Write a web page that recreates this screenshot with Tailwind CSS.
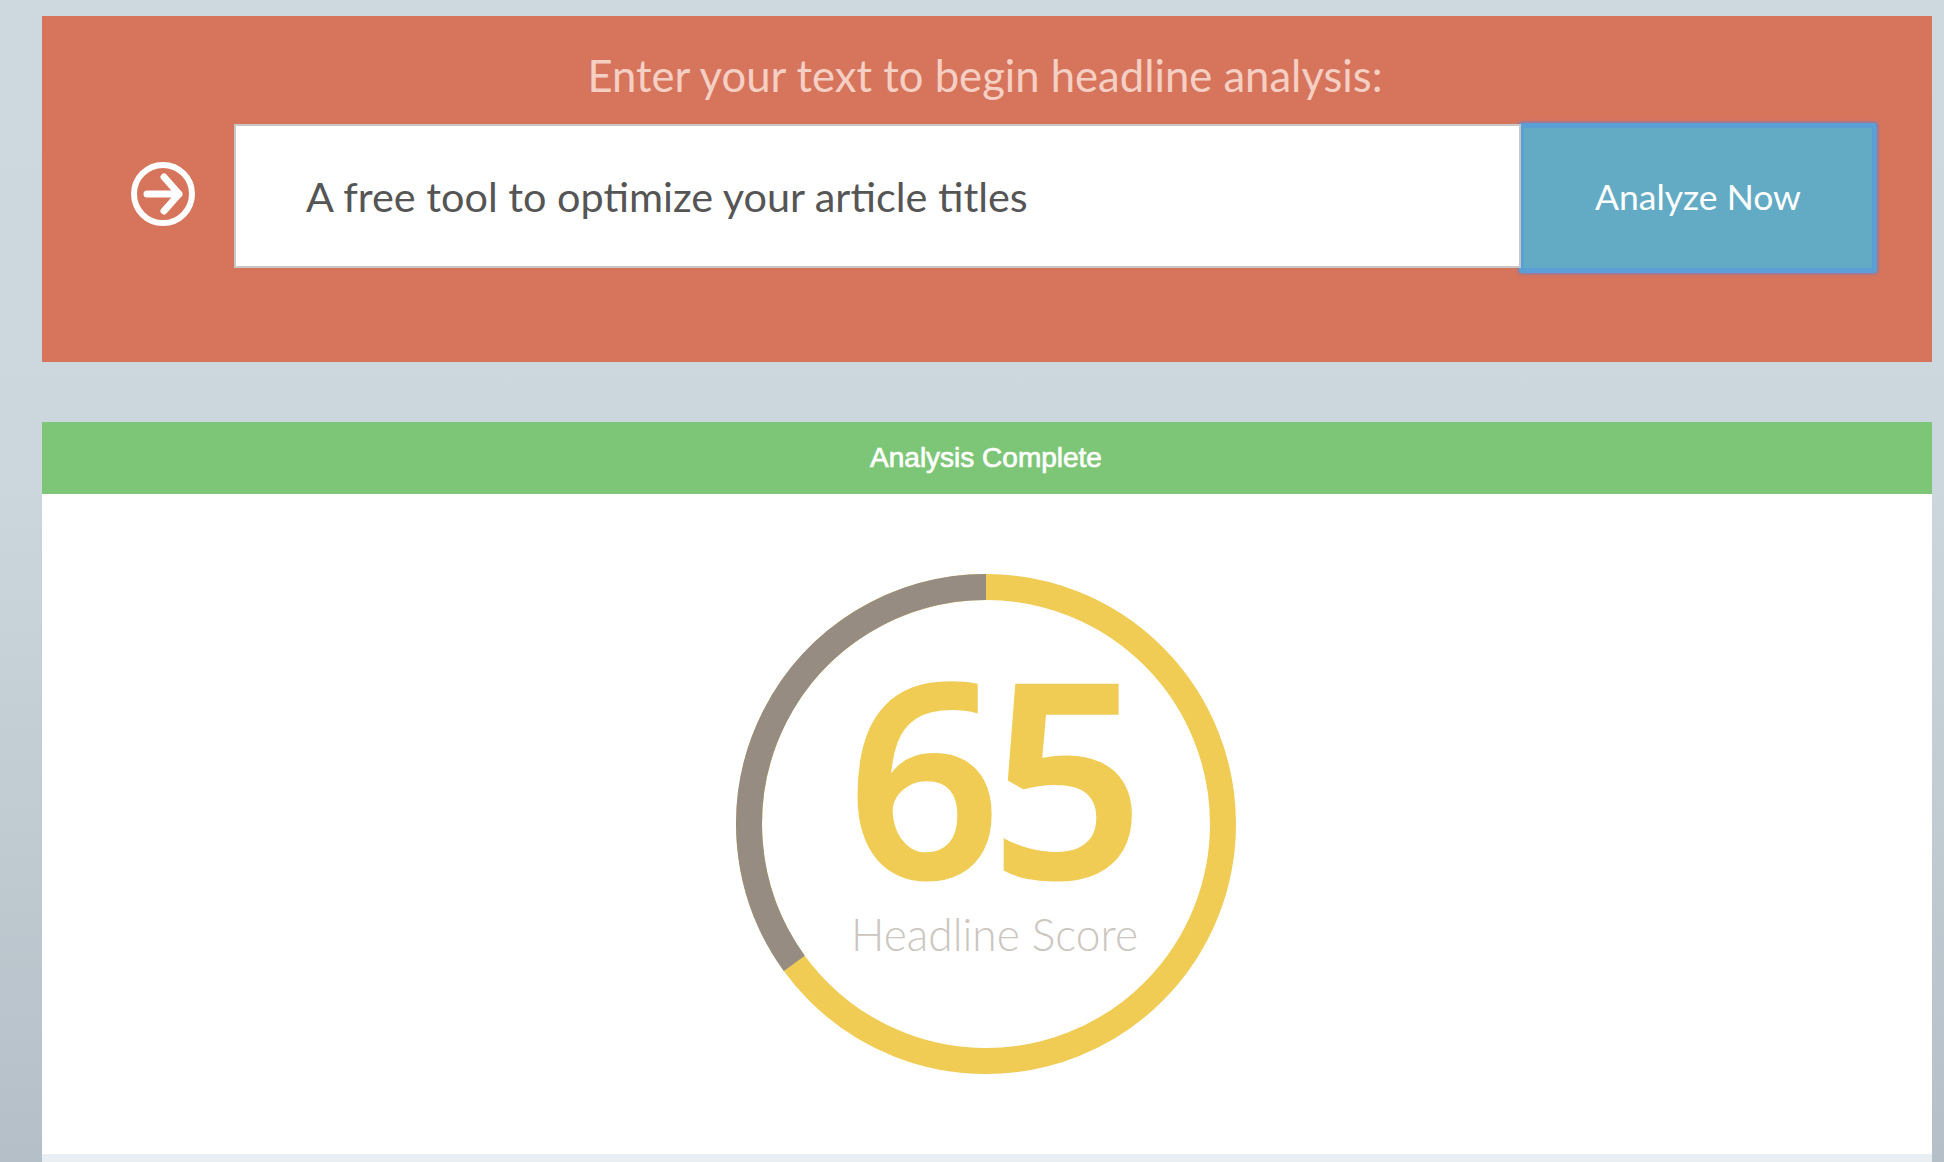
<!doctype html>
<html><head><meta charset="utf-8"><script src="https://cdn.jsdelivr.net/npm/@tailwindcss/browser@4"></script></head>
<body class="m-0 overflow-hidden">
<div class="w-[1944px] h-[1162px] overflow-hidden flex flex-col pt-4 pl-[42px] pr-3 bg-[linear-gradient(180deg,#cdd8df_0%,#cbd6dd_42%,#b4bfc7_100%)] font-['Lato',sans-serif]">
  <section class="h-[346px] shrink-0 bg-[#d6755c] flex flex-col">
    <h1 class="h-[108px] pt-[34px] text-center text-[43.6px] leading-[50px] font-normal text-[#f6cfc4] pr-1">Enter your text to begin headline analysis:</h1>
    <div class="flex items-start">
      <div class="w-[192px] h-[144px] flex items-center justify-center pl-[49px] pb-[4px] shrink-0">
        <svg class="w-16 h-16" viewBox="0 0 64 64" fill="none" stroke="#fff" stroke-linecap="round" stroke-linejoin="round">
          <circle cx="32" cy="32" r="29" stroke-width="6"/>
          <path d="M16 32H48M33 15L48 32L33 49" stroke-width="7"/>
        </svg>
      </div>
      <div class="w-[1287px] h-[144px] shrink-0 bg-white border-2 border-[#c8c8c8] flex items-center pl-[70px] text-[#555555] text-[41.4px] relative z-20">A free tool to optimize your article titles</div>
      <button class="w-[358px] h-[150px] -mt-px -ml-[2px] shrink-0 bg-[#63abc4] border-[5px] border-[#5a9fd6] rounded-[3px] shadow-[0_0_3px_1px_rgba(90,130,215,0.75)] text-white text-[35.5px] flex items-center justify-center pb-[2px] relative z-10">Analyze Now</button>
    </div>
  </section>
  <section class="mt-[60px] flex-1 flex flex-col">
    <div class="h-[72px] shrink-0 bg-[#7dc677] flex items-center justify-center pr-[2px] text-white text-[28px] font-normal [-webkit-text-stroke:0.7px_white] font-['Liberation_Sans',sans-serif]">Analysis Complete</div>
    <div class="h-[660px] shrink-0 bg-white relative">
      <svg class="absolute left-[694px] top-[80px] w-[500px] h-[500px]" viewBox="0 0 500 500" fill="none" stroke-width="26">
        <circle cx="250" cy="250" r="237" stroke="#f0cc54"/>
        <path d="M250 13A237 237 0 0 0 58.3 389.3" stroke="#968c81"/>
      </svg>
      <div class="absolute left-[694px] top-[80px] w-[500px] h-[500px]">
        <div class="absolute left-0 top-[100px] w-full text-center pl-[9px] text-[268px] leading-[200px] font-semibold tracking-[-10px] [-webkit-text-stroke:4px_#f0cc54] text-[#f0cc54] font-['Open_Sans',sans-serif]">65</div>
        <div class="absolute left-0 top-[331px] w-full text-center pl-[17px] text-[44.3px] leading-[58px] font-light text-[#cbc6c0]">Headline Score</div>
      </div>
    </div>
    <div class="flex-1 bg-[#e8eef2]"></div>
  </section>
</div>
</body></html>
